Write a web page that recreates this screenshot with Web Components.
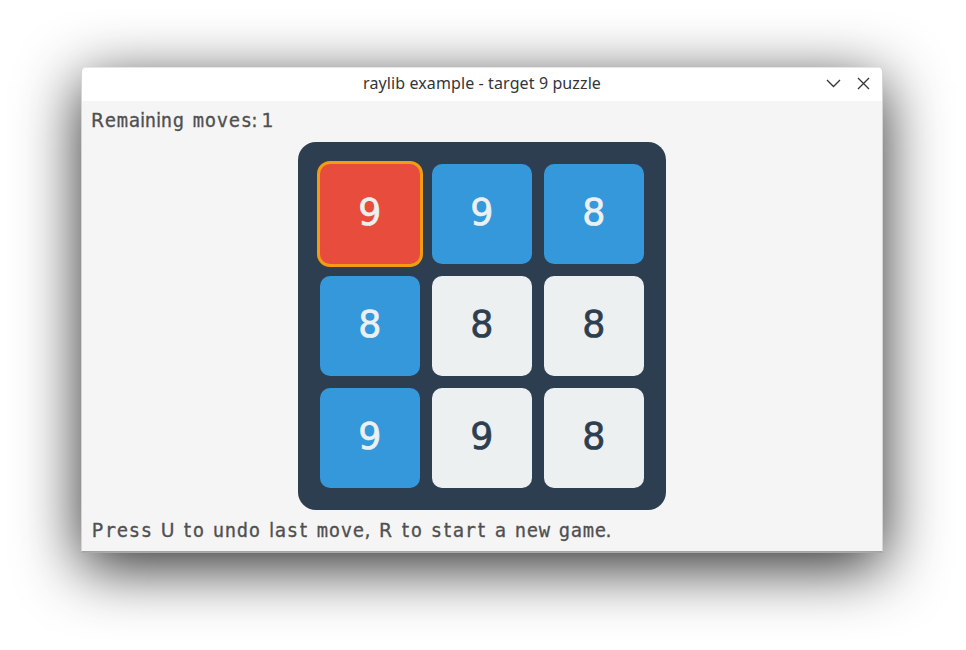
<!DOCTYPE html>
<html lang="en">
<head>
<meta charset="utf-8">
<title>raylib example - target 9 puzzle</title>
<style>
html, body { margin: 0; height: 100%; background: #fff; overflow: hidden; }
body { box-sizing: border-box; padding: 67px 0 0 81px; }
</style>
</head>
<body>
<app-window caption="raylib example - target 9 puzzle">
  <status-line>Remaining moves: 1</status-line>
  <puzzle-board values="998888998" selected="0"></puzzle-board>
  <status-line>Press U to undo last move, R to start a new game.</status-line>
</app-window>
<script>
class AppWindow extends HTMLElement {
  connectedCallback() {
    const root = this.attachShadow({ mode: 'open' });
    root.innerHTML = `<style>
      :host { display: block; box-sizing: border-box; width: 802px; height: 485px; border: 1px solid #d5d5d5; border-bottom-color: #a2a2a2; border-top-color: #e6e6e6; border-radius: 5px 5px 0 0; background: #f5f5f5; box-shadow: 0 1px 0 #aaa, 0 15px 62px rgba(0,0,0,.84); }
      header { height: 33px; display: grid; grid-template-columns: 1fr auto 1fr; align-items: center; background: #fff; border-radius: 4px 4px 0 0; color: #31363b; font: 16px/31px "Noto Sans", sans-serif; letter-spacing: .11px; }
      .title { grid-column: 2; white-space: pre; padding-bottom: 2px; }
      .buttons { display: flex; gap: 14px; justify-content: flex-end; padding: 0 11px 3px 0; }
      svg { width: 16px; height: 16px; fill: none; stroke: #31363b; stroke-width: 1.3; }
      main { height: 450px; box-sizing: border-box; padding: 9px 9px 0; display: flex; flex-direction: column; }
    </style>
    <header><span class="title"></span><span class="buttons">
      <svg viewBox="0 0 16 16"><path d="M2 5 8.500 11.500 15 5"/></svg>
      <svg viewBox="0 0 16 16"><path d="M3 3 14 14M14 3 3 14"/></svg>
    </span></header><main><slot></slot></main>`;
    root.querySelector('.title').textContent = this.getAttribute('caption');
  }
}

// Letters sit on a bitmap-font grid: fixed cell widths with 2px between cells.
const CELL = { R: 12, P: 12, U: 12, t: 8, l: 4, i: 2, ':': 2, '.': 2, ',': 4, '1': 4, ' ': 6 };

class StatusLine extends HTMLElement {
  connectedCallback() {
    const root = this.attachShadow({ mode: 'open' });
    root.innerHTML = `<style>
      :host { display: block; height: 20px; }
      svg { display: block; width: 600px; height: 20px; overflow: visible; }
      text { fill: #505050; stroke: #505050; stroke-width: .3px; font: 18.8px "DejaVu Sans", sans-serif; text-anchor: middle; white-space: pre; }
      .even { font-family: "DejaVu Sans Mono", monospace; }
    </style><svg><text y="16.5"></text></svg>`;
    const text = root.querySelector('text');
    let x = 0.5;
    for (const ch of this.textContent.trim()) {
      const width = CELL[ch] || 10;
      const glyph = document.createElementNS('http://www.w3.org/2000/svg', 'tspan');
      glyph.setAttribute('x', x + width / 2);
      if (!CELL[ch]) glyph.setAttribute('class', 'even');
      glyph.textContent = ch;
      text.append(glyph);
      x += width + 2;
    }
  }
}

class PuzzleTile extends HTMLElement {
  connectedCallback() {
    this.attachShadow({ mode: 'open' }).innerHTML = `<style>
      :host { display: flex; align-items: center; justify-content: center; border-radius: 10px; background: #ecf0f1; color: #2c3e50; font: 37.5px/100px "DejaVu Sans", sans-serif; -webkit-text-stroke: .7px; }
      :host([lit]) { background: #3498db; color: #ecf0f1; }
      :host([selected]) { background: #e74c3c; color: #ecf0f1; box-shadow: 0 0 0 3px #f39c12; }
      span { transform: translateY(-2px) scaleX(.97); }
    </style><span><slot></slot></span>`;
  }
}

class PuzzleBoard extends HTMLElement {
  connectedCallback() {
    const root = this.attachShadow({ mode: 'open' });
    root.innerHTML = `<style>
      :host { display: grid; align-self: center; grid-template: repeat(3, 100px) / repeat(3, 100px); gap: 12px; padding: 22px; margin: 12px 0 10px; border-radius: 18px; background: #2c3e50; }
    </style>`;
    const selected = Number(this.getAttribute('selected'));
    [...this.getAttribute('values')].forEach((value, i) => {
      const tile = document.createElement('puzzle-tile');
      tile.textContent = value;
      const sharesLine = i % 3 === selected % 3 || Math.floor(i / 3) === Math.floor(selected / 3);
      if (sharesLine) tile.setAttribute('lit', '');
      if (i === selected) tile.setAttribute('selected', '');
      root.append(tile);
    });
  }
}
customElements.define('app-window', AppWindow);
customElements.define('status-line', StatusLine);
customElements.define('puzzle-tile', PuzzleTile);
customElements.define('puzzle-board', PuzzleBoard);
</script>
</body>
</html>
